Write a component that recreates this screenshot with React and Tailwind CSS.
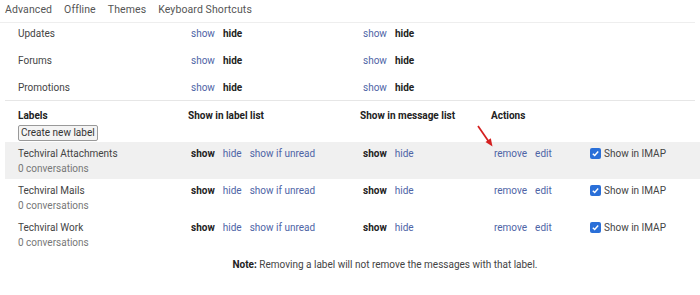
import React from 'react';

const link = 'text-[#4e64a6]';
const bold = 'font-bold text-[#222]';

const Check = () => (
  <span className="inline-flex items-center justify-center w-[11px] h-[11px] rounded-[2px] bg-[#2a6fd8] mr-[2px]">
    <svg viewBox="0 0 10 10" className="w-[9px] h-[9px]">
      <path d="M2 5.2 L4.1 7.2 L8 2.8" fill="none" stroke="white" strokeWidth="1.6" />
    </svg>
  </span>
);

const systemRows = ['Updates', 'Forums', 'Promotions'];
const labels = ['Techviral Attachments', 'Techviral Mails', 'Techviral Work'];

export default function App() {
  return (
    <div className="w-[700px] h-[295px] bg-white text-[10px] leading-[14px] text-[#444] overflow-hidden" style={{ fontFamily: 'Roboto, "Liberation Sans", sans-serif' }}>
      {/* tabs */}
      <div className="flex gap-[12px] pl-[5px] h-[23px] pb-[3px] items-center text-[10.5px] text-[#555] tracking-[0.1px] border-b border-[#eee] mr-[5px]">
        <span>Advanced</span>
        <span>Offline</span>
        <span>Themes</span>
        <span>Keyboard Shortcuts</span>
      </div>

      <div className="px-[5px]">
        {/* system labels */}
        <div className="h-[78px] border-b border-[#e6e6e6] pt-[4px]">
          {systemRows.map((name) => (
            <div key={name} className="grid grid-cols-[170px_172px_1fr] pl-[13px] h-[27px]">
              <span>{name}</span>
              <span className="pl-[3px] flex gap-[8px]">
                <span className={link}>show</span>
                <span className={bold}>hide</span>
              </span>
              <span className="pl-[3px] flex gap-[8px]">
                <span className={link}>show</span>
                <span className={bold}>hide</span>
              </span>
            </div>
          ))}
        </div>

        {/* labels header */}
        <div className="grid grid-cols-[170px_172px_131px_1fr] pl-[13px] pt-[8px] font-bold text-[#222]">
          <span>Labels</span>
          <span>Show in label list</span>
          <span>Show in message list</span>
          <span className="relative">
            Actions
            <svg className="absolute left-[-14px] top-[16px]" width="20" height="24" viewBox="0 0 20 24">
              <line x1="1" y1="1" x2="12" y2="17" stroke="#d42020" strokeWidth="1.7" />
              <path d="M15.5 21.5 L8.5 17 L13.8 13.3 Z" fill="#d42020" />
            </svg>
          </span>
        </div>
        <div className="pl-[13px] pt-[2px] h-[19px]">
          <button className="h-[16px] px-[2px] border border-[#999] rounded-[2px] bg-[#f4f4f4] text-[10px] text-[#333] leading-none">
            Create new label
          </button>
        </div>

        {/* user labels */}
        {labels.map((name, i) => (
          <div
            key={name}
            className={`grid grid-cols-[170px_172px_131px_99px_1fr] pl-[13px] h-[37px] pt-[4px] ${i === 0 ? 'bg-[#f0f0f0] mr-[-5px]' : ''}`}
          >
            <div className="flex flex-col leading-[15px]">
              <span>{name}</span>
              <span className="text-[#777]">0 conversations</span>
            </div>
            <div className="pl-[3px] flex gap-[8px] leading-[15px]">
              <span className={bold}>show</span>
              <span className={link}>hide</span>
              <span className={link}>show if unread</span>
            </div>
            <div className="pl-[3px] flex gap-[8px] leading-[15px]">
              <span className={bold}>show</span>
              <span className={link}>hide</span>
            </div>
            <div className="pl-[3px] flex gap-[8px] leading-[15px]">
              <span className={link}>remove</span>
              <span className={link}>edit</span>
            </div>
            <div className="flex items-center h-[15px] gap-[1px]">
              <Check />
              <span>Show in IMAP</span>
            </div>
          </div>
        ))}

        <div className="text-center pt-[5px] pl-[70px]">
          <span className="font-bold text-[#222]">Note:</span> Removing a label will not remove the messages with that label.
        </div>
      </div>
    </div>
  );
}
